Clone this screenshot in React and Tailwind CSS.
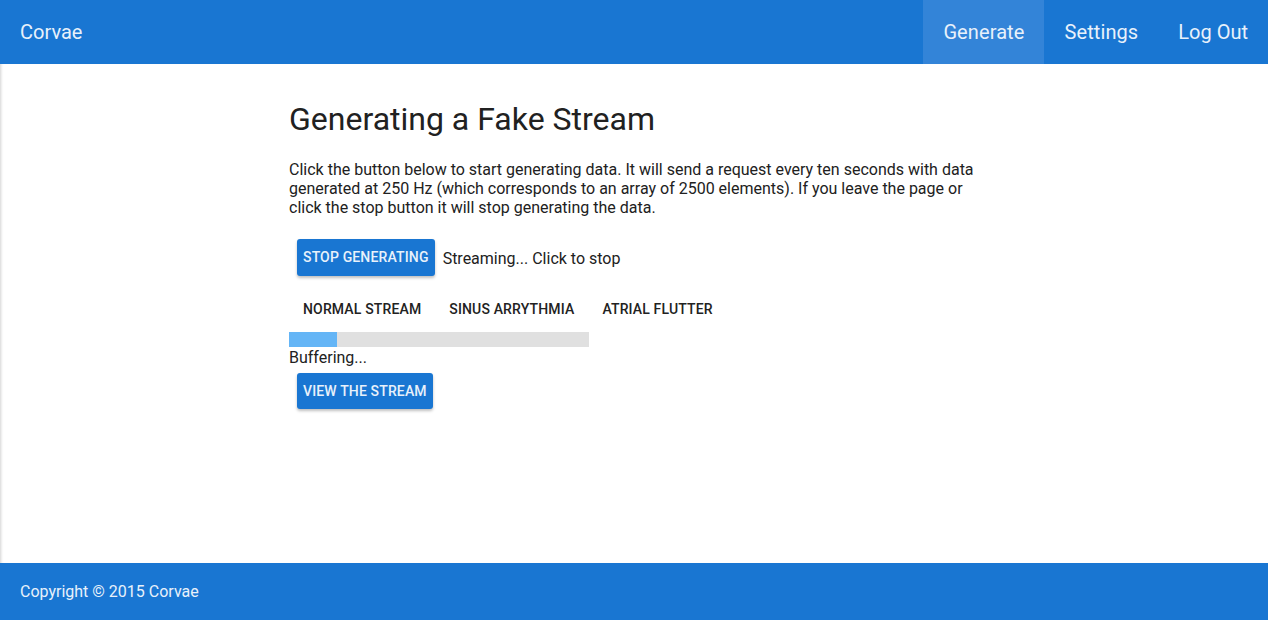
import React from "react";

export default function App() {
  return (
    <div className="flex min-h-[620px] flex-col bg-white font-['Roboto',sans-serif] text-[#212121]">
      <header className="flex h-16 items-stretch justify-between bg-[#1976d2] text-[#e8f1fb]">
        <div className="flex items-center pl-5 text-[20px]">Corvae</div>
        <nav className="flex items-stretch text-[20px]">
          <a className="flex items-center bg-[#3384d8] px-5 tracking-[0.1px]">Generate</a>
          <a className="flex items-center px-5 tracking-[0.1px]">Settings</a>
          <a className="flex items-center px-5">Log Out</a>
        </nav>
      </header>
      <main className="flex-1 shadow-[inset_3px_0_3px_-2px_rgba(0,0,0,0.18)]">
        <div className="mx-auto w-[690px] pt-[36px]">
          <h1 className="text-[32px] leading-[38px] text-[#212121]">Generating a Fake Stream</h1>
          <p className="mt-[22px] text-[16px] leading-[19px]">
            Click the button below to start generating data. It will send a request every ten seconds with data
            generated at 250 Hz (which corresponds to an array of 2500 elements). If you leave the page or
            click the stop button it will stop generating the data.
          </p>
          <div className="mt-[22px] flex items-center">
            <button className="ml-2 h-[37px] rounded-[3px] bg-[#1976d2] px-[6px] text-[14px] font-medium tracking-[0.15px] text-[#e8f1fb] shadow-[0_2px_3px_rgba(0,0,0,0.25)]">
              STOP GENERATING
            </button>
            <span className="ml-[8px] pt-[3px] text-[16px]">Streaming... Click to stop</span>
          </div>
          <div className="mt-[15px] flex text-[14px] font-medium tracking-[0.15px] text-[#222]">
            <button className="h-[36px] px-[14px]">NORMAL STREAM</button>
            <button className="h-[36px] px-[14px]">SINUS ARRYTHMIA</button>
            <button className="h-[36px] px-[14px]">ATRIAL FLUTTER</button>
          </div>
          <div className="mt-[5px] h-[15px] w-[300px] bg-[#e0e0e0]">
            <div className="h-full bg-[#64b5f6]" style={{ width: "16%" }} />
          </div>
          <div className="pt-[1px] text-[16px] leading-[19px]">Buffering...</div>
          <button className="ml-2 mt-[6px] h-[36px] rounded-[3px] bg-[#1976d2] px-[6px] text-[14px] font-medium tracking-[0.15px] text-[#e8f1fb] shadow-[0_2px_3px_rgba(0,0,0,0.25)]">
            VIEW THE STREAM
          </button>
        </div>
      </main>
      <footer className="flex h-[57px] items-center bg-[#1976d2] pl-5 pt-[1px] text-[16px] text-[#e8f1fb]">
        Copyright © 2015 Corvae
      </footer>
    </div>
  );
}
